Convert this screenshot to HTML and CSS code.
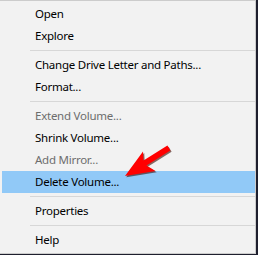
FILE: index.html
```html
<!DOCTYPE html>
<html lang="en">
<head>
  <meta charset="UTF-8">
  <title>Disk context menu</title>
  <link rel="stylesheet" href="styles.css">
</head>
<body>
  <div class="menu">
    <div class="item">Open</div>
    <div class="item">Explore</div>
    <div class="sep"></div>
    <div class="item">Change Drive Letter and Paths...</div>
    <div class="item">Format...</div>
    <div class="sep"></div>
    <div class="item disabled">Extend Volume...</div>
    <div class="item">Shrink Volume...</div>
    <div class="item disabled">Add Mirror...</div>
    <div class="item active">Delete Volume...</div>
    <div class="sep"></div>
    <div class="item">Properties</div>
    <div class="sep"></div>
    <div class="item">Help</div>
  </div>

  <!-- red pointer arrow drawn over the menu -->
  <svg class="arrow" width="258" height="255" viewBox="0 0 258 255">
    <polygon class="arrow-shadow" points="125,176 143,151.5 143.5,160.5 167.4,145.6 170.4,150.6 146.5,165.5 155.5,171" transform="translate(1.2,1.2)"/>
    <polygon class="arrow-body" points="125,176 143,151.5 143.5,160.5 167.4,145.6 170.4,150.6 146.5,165.5 155.5,171"/>
  </svg>
</body>
</html>
```

FILE: styles.css
```css
body {
  margin: 0;
  background: #1e1f2e;
  font-family: "Noto Sans", "Open Sans", sans-serif;
  font-size: 11.5px;
  letter-spacing: -0.25px;
  position: relative;
  height: 255px;
  overflow: hidden;
}

/* menu box */
.menu {
  width: 253px;
  background: #f2f2f2;
  border-top: 1px solid #cccccc;
  border-right: 1px solid #cccccc;
  border-bottom: 1px solid #cccccc;
  padding: 2px 0 2px 2px;
  display: flex;
  flex-direction: column;
}

.item {
  height: 22px;
  line-height: 22px;
  padding-left: 33px;
  color: #000;
  white-space: nowrap;
}

.item.disabled {
  color: #6d6d6d;
}

.item.active {
  background: #91c9f7;
}

.sep {
  height: 1px;
  background: #d7d7d7;
  margin: 3px 0 3px 28px;
}

/* arrow overlay */
.arrow {
  position: absolute;
  left: 0;
  top: 0;
}

.arrow-shadow {
  fill: #3a0a00;
  opacity: 0.6;
}

.arrow-body {
  fill: #ff0000;
}
```
